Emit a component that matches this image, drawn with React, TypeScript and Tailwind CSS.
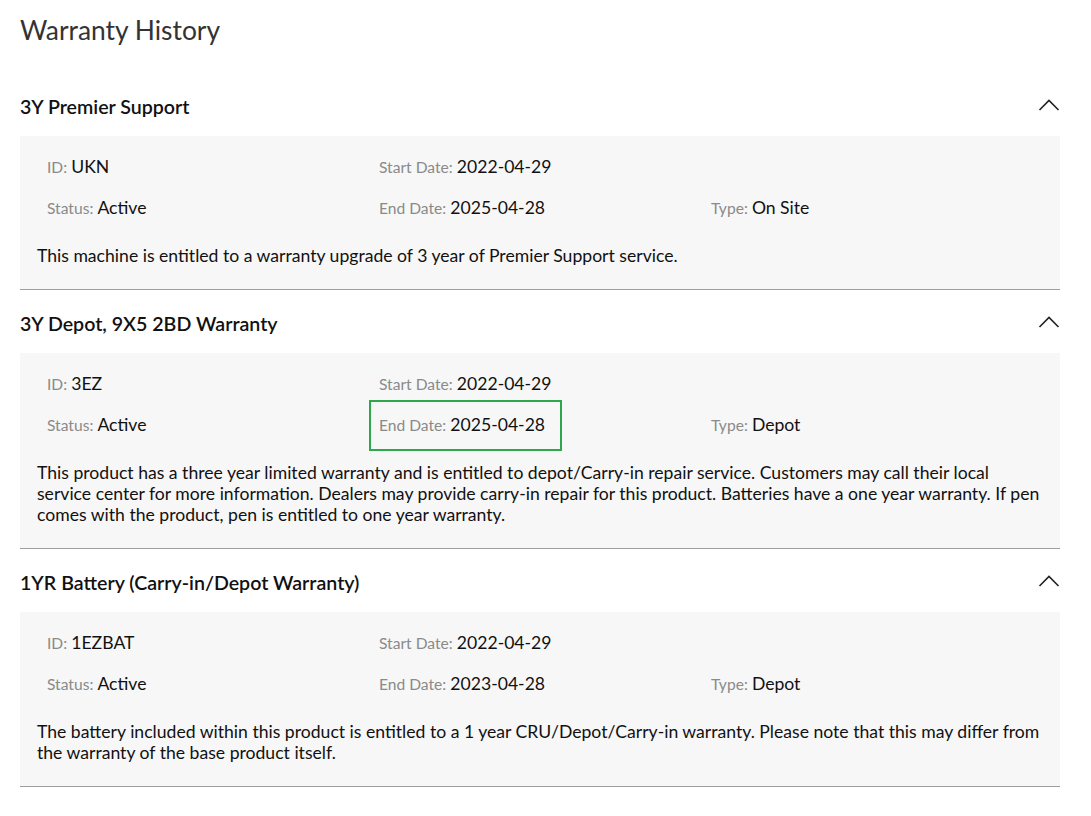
import React from "react";

type Warranty = {
  name: string;
  id: string;
  status: string;
  start: string;
  end: string;
  type: string;
  description: string;
  highlightEnd?: boolean;
};

const warranties: Warranty[] = [
  {
    name: "3Y Premier Support",
    id: "UKN",
    status: "Active",
    start: "2022-04-29",
    end: "2025-04-28",
    type: "On Site",
    description: "This machine is entitled to a warranty upgrade of 3 year of Premier Support service.",
  },
  {
    name: "3Y Depot, 9X5 2BD Warranty",
    id: "3EZ",
    status: "Active",
    start: "2022-04-29",
    end: "2025-04-28",
    type: "Depot",
    highlightEnd: true,
    description:
      "This product has a three year limited warranty and is entitled to depot/Carry-in repair service. Customers may call their local service center for more information. Dealers may provide carry-in repair for this product. Batteries have a one year warranty. If pen comes with the product, pen is entitled to one year warranty.",
  },
  {
    name: "1YR Battery (Carry-in/Depot Warranty)",
    id: "1EZBAT",
    status: "Active",
    start: "2022-04-29",
    end: "2023-04-28",
    type: "Depot",
    description:
      "The battery included within this product is entitled to a 1 year CRU/Depot/Carry-in warranty. Please note that this may differ from the warranty of the base product itself.",
  },
];

function Field({ label, value, highlight }: { label: string; value?: string; highlight?: boolean }) {
  return (
    <div className="relative flex h-[41px] w-[332px] items-center px-[10px]">
      {value !== undefined && (
        <span className="leading-[21px]">
          <span className="text-[15.6px] text-[#8a8a8a]">{label}:</span>{" "}
          <span className="text-[17.6px] text-[#111]">{value}</span>
        </span>
      )}
      {highlight && (
        <div className="absolute left-0 top-[-4px] h-[51px] w-[193px] border-2 border-[#2ea84a]" />
      )}
    </div>
  );
}

function Chevron() {
  return (
    <svg width="22" height="14" viewBox="0 0 22 14" fill="none" className="mt-[-3px]">
      <path d="M1.5 12L11 2.5L20.5 12" stroke="#222" strokeWidth="1.6" />
    </svg>
  );
}

function Section({ w }: { w: Warranty }) {
  return (
    <section>
      <div className="flex h-[63px] items-center justify-between pt-[4px]">
        <h3 className="text-[19.6px] font-semibold text-[#111]">{w.name}</h3>
        <Chevron />
      </div>
      <div className="border-b border-[#9e9e9e] bg-[#f7f7f7] px-[17px] pb-[23px] pt-[10px]">
        <div className="flex">
          <Field label="ID" value={w.id} />
          <Field label="Start Date" value={w.start} />
          <Field label="" />
        </div>
        <div className="flex">
          <Field label="Status" value={w.status} />
          <Field label="End Date" value={w.end} highlight={w.highlightEnd} />
          <Field label="Type" value={w.type} />
        </div>
        <p className="mt-[17px] text-[17.6px] leading-[21px] text-[#111]">{w.description}</p>
      </div>
    </section>
  );
}

export default function App() {
  return (
    <div className="min-h-screen bg-white px-[20px] pr-[31px] font-['Lato',sans-serif]">
      <h2 className="pt-[14px] text-[26.4px] leading-[32px] text-[#333]">Warranty History</h2>
      <div className="mt-[27px]">
        {warranties.map((w) => (
          <Section key={w.name} w={w} />
        ))}
      </div>
    </div>
  );
}
